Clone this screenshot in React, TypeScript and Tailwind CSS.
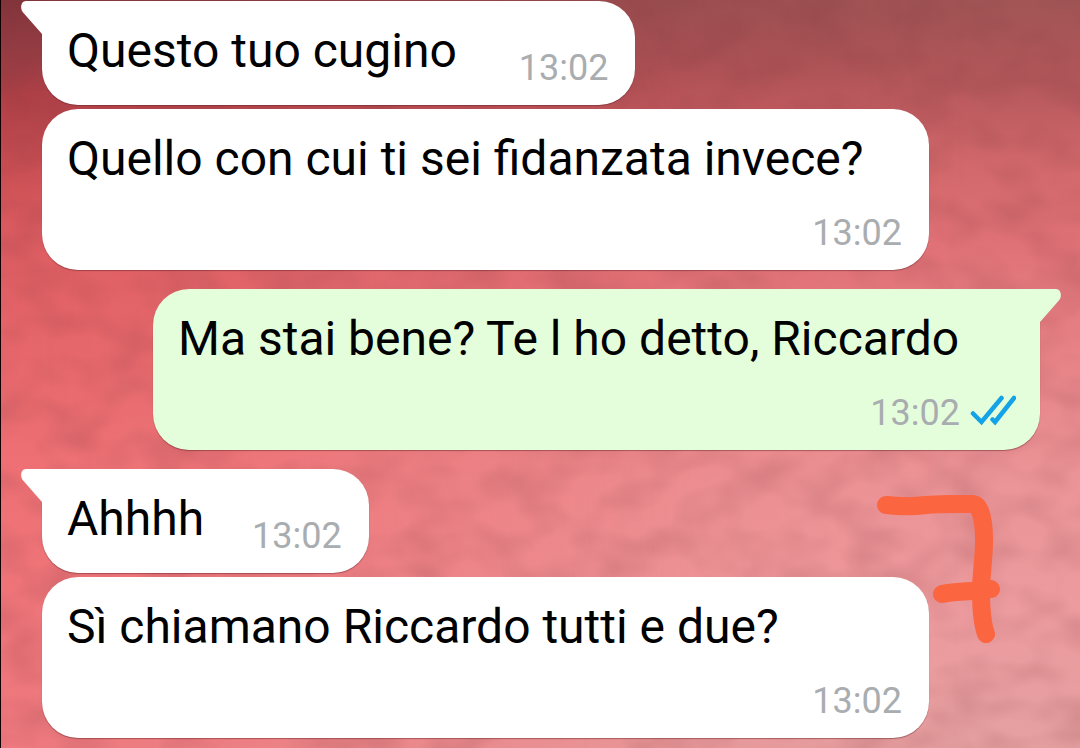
import type { ReactNode } from 'react';

type Message = {
  text: string;
  time: string;
  outgoing?: boolean;
  tail?: boolean;
  wide?: boolean;
  short?: boolean;
};

const groups: Message[][] = [
  [
    { text: 'Questo tuo cugino', time: '13:02', tail: true },
    { text: 'Quello con cui ti sei fidanzata invece?', time: '13:02', wide: true },
  ],
  [{ text: 'Ma stai bene? Te l ho detto, Riccardo', time: '13:02', outgoing: true, tail: true, wide: true }],
  [
    { text: 'Ahhhh', time: '13:02', tail: true, short: true },
    { text: 'Sì chiamano Riccardo tutti e due?', time: '13:02', wide: true },
  ],
];

function Wallpaper() {
  return (
    <svg aria-hidden="true" className="absolute inset-0 h-full w-full" viewBox="0 0 1080 748" preserveAspectRatio="none">
      <defs>
        <linearGradient id="left" x1="0" y1="0" x2="0" y2="1">
          <stop offset="0" stopColor="#82343b" />
          <stop offset="0.07" stopColor="#963c43" />
          <stop offset="0.13" stopColor="#b04047" />
          <stop offset="0.22" stopColor="#c94e53" />
          <stop offset="0.32" stopColor="#de5d62" />
          <stop offset="0.48" stopColor="#e7676b" />
          <stop offset="0.62" stopColor="#ee7074" />
          <stop offset="1" stopColor="#ee797e" />
        </linearGradient>
        <linearGradient id="right" x1="0" y1="0" x2="0" y2="1">
          <stop offset="0" stopColor="#a25555" />
          <stop offset="0.08" stopColor="#ad5558" />
          <stop offset="0.15" stopColor="#bf5d61" />
          <stop offset="0.22" stopColor="#d1686b" />
          <stop offset="0.32" stopColor="#df7176" />
          <stop offset="0.48" stopColor="#e78387" />
          <stop offset="0.65" stopColor="#eb9598" />
          <stop offset="0.82" stopColor="#ec9b9e" />
          <stop offset="1" stopColor="#e5a0a1" />
        </linearGradient>
        <linearGradient id="fade" x1="0" y1="0" x2="1" y2="0">
          <stop offset="0" stopColor="#000" />
          <stop offset="0.2" stopColor="#222" />
          <stop offset="0.65" stopColor="#ccc" />
          <stop offset="0.9" stopColor="#fff" />
        </linearGradient>
        <mask id="rightMask">
          <rect width="1080" height="748" fill="url(#fade)" />
        </mask>
        <filter id="mottle" x="0" y="0" width="100%" height="100%" colorInterpolationFilters="sRGB">
          <feTurbulence type="fractalNoise" baseFrequency="0.02 0.03" numOctaves="2" seed="7" />
          <feColorMatrix values="0 0 0 0 0.5  0 0 0 0 0.22  0 0 0 0 0.24  0.4 0 0 0 -0.15" />
        </filter>
      </defs>
      <rect width="1080" height="748" fill="url(#left)" />
      <rect width="1080" height="748" fill="url(#right)" mask="url(#rightMask)" />
      <rect width="1080" height="748" filter="url(#mottle)" />
      <rect width="1" height="748" fill="#100000" />
    </svg>
  );
}

function Tail({ outgoing }: { outgoing?: boolean }) {
  return (
    <svg
      aria-hidden="true"
      viewBox="0 0 22 34"
      className={
        outgoing
          ? 'absolute top-0 left-full -ml-px h-[34px] w-[22px] -scale-x-100 text-[#e4fedb]'
          : 'absolute top-0 right-full -mr-px h-[34px] w-[22px] text-white'
      }
    >
      <path d="M22 0H5C1 0-1 5 0.8 9.5C1.2 10.6 2 11.5 3 12.6L21 33H22Z" fill="currentColor" />
    </svg>
  );
}

function ReadTicks() {
  return (
    <svg role="img" aria-label="Letto" viewBox="0 0 46 36" className="h-[36px] w-[46px]">
      <g fill="none" stroke="#14a3e6" strokeWidth="4.5" strokeLinecap="round" strokeLinejoin="miter">
        <path d="M3 18.500L11.500 27L31.500 3" />
        <path d="M22.500 24.500L25 27L44 3" />
      </g>
    </svg>
  );
}

function Bubble({ message }: { message: Message }) {
  const { text, time, outgoing, tail, wide, short } = message;
  const shape = wide ? 'w-full max-w-[887px] flex-col gap-[25px]' : short ? 'items-end gap-12' : 'items-end gap-[62px]';
  const colour = outgoing ? 'self-end bg-[#e4fedb] pr-6' : 'self-start bg-white pr-[27px]';
  const corner = tail ? (outgoing ? 'rounded-tr-none' : 'rounded-tl-none') : '';
  return (
    <li className={`relative flex rounded-[36px] pt-[22px] pb-4 pl-[25px] shadow-[0_1px_1px_rgba(90,30,35,0.45)] ${shape} ${colour} ${corner}`}>
      {tail && <Tail outgoing={outgoing} />}
      <p className={wide ? 'text-[48px] leading-[56px] text-black' : 'pb-2.5 text-[48px] leading-[56px] text-black'}>{text}</p>
      <div className="flex items-center justify-end gap-2.5 text-[36px] leading-[42px] text-[#a9adb0]">
        <time>{time}</time>
        {outgoing && <ReadTicks />}
      </div>
    </li>
  );
}

function Group({ children }: { children: ReactNode }) {
  return <ul className="flex flex-col gap-1">{children}</ul>;
}

export default function App() {
  return (
    <main className="relative min-h-screen overflow-hidden bg-[#ea7b80] font-['Roboto',sans-serif]">
      <Wallpaper />
      <div className="relative flex flex-col gap-[19px] pt-px pr-10 pb-2.5 pl-[42px]">
        {groups.map((group, i) => (
          <Group key={i}>
            {group.map((message) => (
              <Bubble key={message.text} message={message} />
            ))}
          </Group>
        ))}
      </div>
      <svg role="img" aria-label="7" viewBox="0 0 126 150" className="absolute right-[78px] bottom-[103px] h-[150px] w-[126px]">
        <g fill="none" stroke="#fb653f" strokeWidth="18" strokeLinecap="round" strokeLinejoin="round">
          <path d="M10 10C24 11.500 38 11.500 50 10C65 8.500 82 9 96 9C105 9 108 27 108 45C108 65 105 80 105 96C105 112 106 128 110 139" />
          <path d="M66 99C82 95.500 98 97 115 94" />
        </g>
      </svg>
    </main>
  );
}
